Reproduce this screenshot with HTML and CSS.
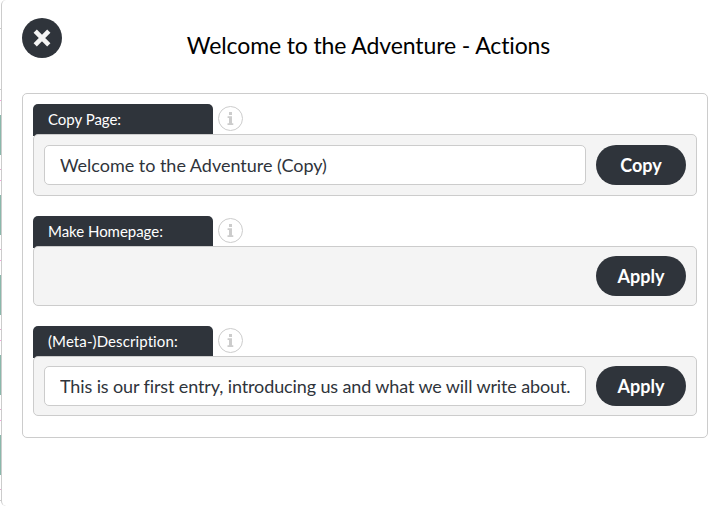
FILE: index.html
```
<!DOCTYPE html>
<html lang="en">
<head>
<meta charset="utf-8">
<title>Welcome to the Adventure - Actions</title>
<link rel="stylesheet" href="styles.css">
</head>
<body>
<div class="backdrop">
  <main class="panel">
    <header class="head">
      <button class="close" aria-label="Close"><svg width="40" height="40" viewBox="0 0 40 40"><path d="M13.2 13.2L26.8 26.8M26.8 13.2L13.2 26.8" stroke="#f4f4f4" stroke-width="4.6"/></svg></button>
      <h1 class="title">Welcome to the Adventure - Actions</h1>
    </header>
    <div class="actions">
      <section class="action">
        <div class="tabs"><div class="tab">Copy Page:</div><span class="info"><svg width="25" height="25" viewBox="0 0 25 25"><circle cx="12.5" cy="12.5" r="12"/><path d="M11 6h3v3h-3zM10 10.3h4v7h1.3v1.7h-5.8v-1.7H11v-5.3h-1.4v-1.7z"/></svg></span></div>
        <div class="row row-tall"><input class="field" value="Welcome to the Adventure (Copy)"><button class="btn">Copy</button></div>
      </section>
      <section class="action">
        <div class="tabs"><div class="tab">Make Homepage:</div><span class="info"><svg width="25" height="25" viewBox="0 0 25 25"><circle cx="12.5" cy="12.5" r="12"/><path d="M11 6h3v3h-3zM10 10.3h4v7h1.3v1.7h-5.8v-1.7H11v-5.3h-1.4v-1.7z"/></svg></span></div>
        <div class="row"><button class="btn">Apply</button></div>
      </section>
      <section class="action">
        <div class="tabs"><div class="tab tab-wide">(Meta-)Description:</div><span class="info"><svg width="25" height="25" viewBox="0 0 25 25"><circle cx="12.5" cy="12.5" r="12"/><path d="M11 6h3v3h-3zM10 10.3h4v7h1.3v1.7h-5.8v-1.7H11v-5.3h-1.4v-1.7z"/></svg></span></div>
        <div class="row"><input class="field field-long" value="This is our first entry, introducing us and what we will write about."><button class="btn">Apply</button></div>
      </section>
    </div>
  </main>
</div>
</body>
</html>
```
FILE: styles.css
```
* { box-sizing: border-box; }
body {
  margin: 0;
  font-family: Lato, sans-serif;
  font-variant-ligatures: none;
  color: #2f343b;
  overflow: hidden;
}
/* The page behind the panel shows as a thin strip on the left. */
.backdrop {
  height: 506px;
  padding-left: 1px;
  background:
    linear-gradient(#ccc, #ccc) 0 28px / 1px 1px no-repeat,
    linear-gradient(#ccc, #ccc) 0 89px / 1px 1px no-repeat,
    linear-gradient(#ccc, #ccc) 0 500px / 1px 1px no-repeat,
    linear-gradient(#fff, #fff) 0 0 / 1px 100px no-repeat,
    linear-gradient(#fff, #fff) 0 490px / 1px 16px no-repeat,
    repeating-linear-gradient(#f8a0dc 0 1px, #fff 1px 15px, #8ab8ab 15px 55px, #fff 55px 69px, #e8a8d0 69px 70px, #fff 70px 80px) 0 100px / 1px 400px no-repeat,
    #fff;
}
.panel {
  height: 506px;
  padding: 18px 18px 0 20px;
  border-left: 1px solid #ccc;
  border-radius: 5px 0 0 5px;
  background: #fff;
}
.head {
  display: flex;
  height: 75px;
}
.close {
  width: 40px;
  height: 40px;
  padding: 0;
  border: 0;
  border-radius: 50%;
  background: #2f343b;
}
.close svg { display: block; }
.title {
  flex: 1;
  margin: 13px 33px 0 0;
  font-size: 23px;
  font-weight: 400;
  line-height: 28px;
  letter-spacing: -0.12px;
  text-align: center;
  color: #000;
}
.actions {
  height: 345px;
  padding: 10px;
  border: 1px solid #ccc;
  border-radius: 5px;
}
.action { margin-bottom: 20px; }
.tabs {
  display: flex;
  height: 30px;
}
.tab {
  width: 180px;
  height: 32px;
  padding-left: 15px;
  border-radius: 5px 5px 0 0;
  background: #2f343b;
  color: #fff;
  font-size: 15px;
  line-height: 31px;
  letter-spacing: -0.03px;
}
.tab-wide { letter-spacing: 0.1px; }
.info { margin: 2px 0 0 5px; }
.info svg { display: block; }
.info circle { fill: #fff; stroke: #ccc; }
.info path { fill: #ccc; }
.row {
  position: relative;
  display: flex;
  justify-content: flex-end;
  gap: 10px;
  padding: 9px 10px;
  border: 1px solid #ccc;
  border-radius: 5px;
  background: #f4f4f4;
}
.row-tall { padding: 10px; }
.field {
  flex: 1;
  min-width: 0;
  height: 40px;
  padding: 0 15px;
  border: 1px solid #ccc;
  border-radius: 5px;
  background: #fff;
  color: #2f343b;
  font: 18px Lato, sans-serif;
  letter-spacing: -0.02px;
}
.field-long { letter-spacing: -0.12px; }
.btn {
  width: 90px;
  height: 40px;
  padding: 0;
  border: 0;
  border-radius: 20px;
  background: #2f343b;
  color: #fff;
  font: bold 18px Lato, sans-serif;
}
```
